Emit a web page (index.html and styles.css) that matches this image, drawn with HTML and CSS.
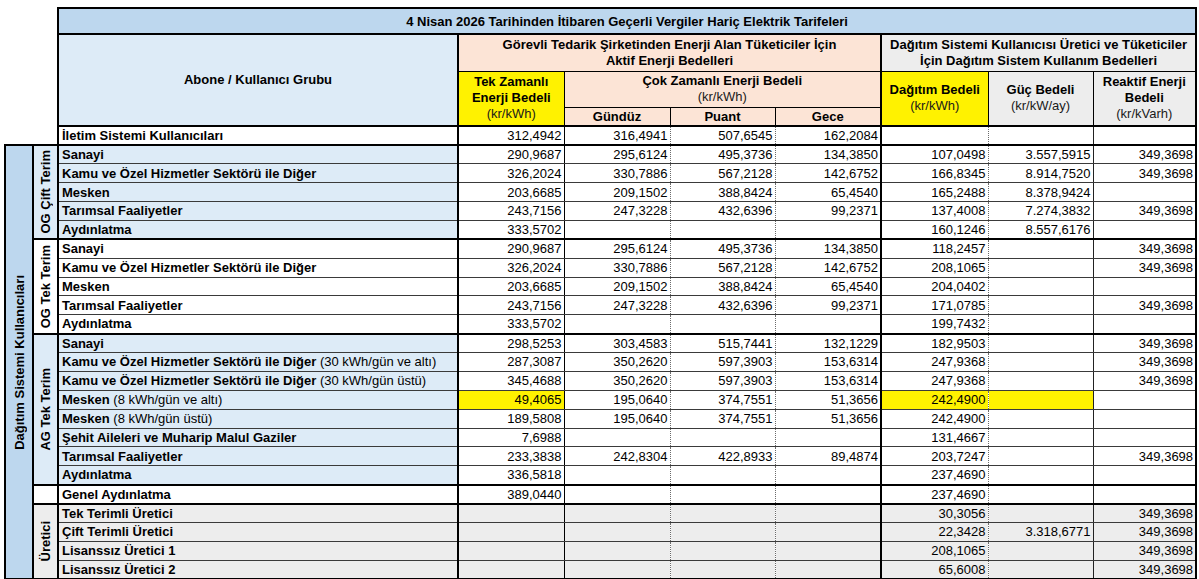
FILE: index.html
```html
<!DOCTYPE html>
<html lang="tr">
<head>
<meta charset="utf-8">
<title>Elektrik Tarifeleri</title>
<link rel="stylesheet" href="styles.css">
</head>
<body>
<table class="tariff">
  <colgroup>
    <col class="w-c1"><col class="w-c2"><col class="w-lb"><col class="w-n"><col class="w-n"><col class="w-n2"><col class="w-n"><col class="w-dg"><col class="w-n2"><col class="w-rk">
  </colgroup>
  <thead>
    <tr class="h1">
      <td class="blank" colspan="2" rowspan="4"></td>
      <th class="title" colspan="8">4 Nisan 2026 Tarihinden İtibaren Geçerli Vergiler Hariç Elektrik Tarifeleri</th>
    </tr>
    <tr class="h2">
      <th class="hgroup" rowspan="3">Abone / Kullanıcı Grubu</th>
      <th class="peach hsec" colspan="4">Görevli Tedarik Şirketinden Enerji Alan Tüketiciler İçin<br>Aktif Enerji Bedelleri</th>
      <th class="gray hsec hright" colspan="3">Dağıtım Sistemi Kullanıcısı Üretici ve Tüketiciler<br>İçin Dağıtım Sistem Kullanım Bedelleri</th>
    </tr>
    <tr class="h3">
      <th class="yellow tk" rowspan="2">Tek Zamanlı<br>Enerji Bedeli<br><span class="unit">(kr/kWh)</span></th>
      <th class="peach gd" colspan="3">Çok Zamanlı Enerji Bedeli<br><span class="unit">(kr/kWh)</span></th>
      <th class="yellow dg" rowspan="2">Dağıtım Bedeli<br><span class="unit">(kr/kWh)</span></th>
      <th class="gray gu" rowspan="2">Güç Bedeli<br><span class="unit">(kr/kW/ay)</span></th>
      <th class="gray rk" rowspan="2">Reaktif Enerji<br>Bedeli<br><span class="unit">(kr/kVarh)</span></th>
    </tr>
    <tr class="h4">
      <th class="peach gd">Gündüz</th>
      <th class="peach pu">Puant</th>
      <th class="peach gc">Gece</th>
    </tr>
  </thead>
  <tbody>
    <tr class="end">
      <td class="blank" colspan="2"></td>
      <td class="lb">İletim Sistemi Kullanıcıları</td>
      <td class="tk">312,4942</td><td class="gd">316,4941</td><td class="pu">507,6545</td><td class="gc">162,2084</td>
      <td class="dg"></td><td class="gu"></td><td class="rk"></td>
    </tr>

    <tr class="blue">
      <td class="c1" rowspan="23"><div class="vt">Dağıtım Sistemi Kullanıcıları</div></td>
      <td class="c2 blue" rowspan="5"><div class="vt">OG Çift Terim</div></td>
      <td class="lb">Sanayi</td>
      <td class="tk">290,9687</td><td class="gd">295,6124</td><td class="pu">495,3736</td><td class="gc">134,3850</td>
      <td class="dg">107,0498</td><td class="gu">3.557,5915</td><td class="rk">349,3698</td>
    </tr>
    <tr class="blue">
      <td class="lb">Kamu ve Özel Hizmetler Sektörü ile Diğer</td>
      <td class="tk">326,2024</td><td class="gd">330,7886</td><td class="pu">567,2128</td><td class="gc">142,6752</td>
      <td class="dg">166,8345</td><td class="gu">8.914,7520</td><td class="rk">349,3698</td>
    </tr>
    <tr class="blue">
      <td class="lb">Mesken</td>
      <td class="tk">203,6685</td><td class="gd">209,1502</td><td class="pu">388,8424</td><td class="gc">65,4540</td>
      <td class="dg">165,2488</td><td class="gu">8.378,9424</td><td class="rk"></td>
    </tr>
    <tr class="blue">
      <td class="lb">Tarımsal Faaliyetler</td>
      <td class="tk">243,7156</td><td class="gd">247,3228</td><td class="pu">432,6396</td><td class="gc">99,2371</td>
      <td class="dg">137,4008</td><td class="gu">7.274,3832</td><td class="rk">349,3698</td>
    </tr>
    <tr class="blue end">
      <td class="lb">Aydınlatma</td>
      <td class="tk">333,5702</td><td class="gd"></td><td class="pu"></td><td class="gc"></td>
      <td class="dg">160,1246</td><td class="gu">8.557,6176</td><td class="rk"></td>
    </tr>

    <tr>
      <td class="c2" rowspan="5"><div class="vt">OG Tek Terim</div></td>
      <td class="lb">Sanayi</td>
      <td class="tk">290,9687</td><td class="gd">295,6124</td><td class="pu">495,3736</td><td class="gc">134,3850</td>
      <td class="dg">118,2457</td><td class="gu"></td><td class="rk">349,3698</td>
    </tr>
    <tr>
      <td class="lb">Kamu ve Özel Hizmetler Sektörü ile Diğer</td>
      <td class="tk">326,2024</td><td class="gd">330,7886</td><td class="pu">567,2128</td><td class="gc">142,6752</td>
      <td class="dg">208,1065</td><td class="gu"></td><td class="rk">349,3698</td>
    </tr>
    <tr>
      <td class="lb">Mesken</td>
      <td class="tk">203,6685</td><td class="gd">209,1502</td><td class="pu">388,8424</td><td class="gc">65,4540</td>
      <td class="dg">204,0402</td><td class="gu"></td><td class="rk"></td>
    </tr>
    <tr>
      <td class="lb">Tarımsal Faaliyetler</td>
      <td class="tk">243,7156</td><td class="gd">247,3228</td><td class="pu">432,6396</td><td class="gc">99,2371</td>
      <td class="dg">171,0785</td><td class="gu"></td><td class="rk">349,3698</td>
    </tr>
    <tr class="end">
      <td class="lb">Aydınlatma</td>
      <td class="tk">333,5702</td><td class="gd"></td><td class="pu"></td><td class="gc"></td>
      <td class="dg">199,7432</td><td class="gu"></td><td class="rk"></td>
    </tr>

    <tr class="blue">
      <td class="c2 blue" rowspan="8"><div class="vt">AG Tek Terim</div></td>
      <td class="lb">Sanayi</td>
      <td class="tk">298,5253</td><td class="gd">303,4583</td><td class="pu">515,7441</td><td class="gc">132,1229</td>
      <td class="dg">182,9503</td><td class="gu"></td><td class="rk">349,3698</td>
    </tr>
    <tr class="blue">
      <td class="lb">Kamu ve Özel Hizmetler Sektörü ile Diğer <span class="note">(30 kWh/gün ve altı)</span></td>
      <td class="tk">287,3087</td><td class="gd">350,2620</td><td class="pu">597,3903</td><td class="gc">153,6314</td>
      <td class="dg">247,9368</td><td class="gu"></td><td class="rk">349,3698</td>
    </tr>
    <tr class="blue">
      <td class="lb">Kamu ve Özel Hizmetler Sektörü ile Diğer <span class="note">(30 kWh/gün üstü)</span></td>
      <td class="tk">345,4688</td><td class="gd">350,2620</td><td class="pu">597,3903</td><td class="gc">153,6314</td>
      <td class="dg">247,9368</td><td class="gu"></td><td class="rk">349,3698</td>
    </tr>
    <tr class="blue">
      <td class="lb">Mesken <span class="note">(8 kWh/gün ve altı)</span></td>
      <td class="tk yellow">49,4065</td><td class="gd">195,0640</td><td class="pu">374,7551</td><td class="gc">51,3656</td>
      <td class="dg yellow">242,4900</td><td class="gu yellow"></td><td class="rk"></td>
    </tr>
    <tr class="blue">
      <td class="lb">Mesken <span class="note">(8 kWh/gün üstü)</span></td>
      <td class="tk">189,5808</td><td class="gd">195,0640</td><td class="pu">374,7551</td><td class="gc">51,3656</td>
      <td class="dg">242,4900</td><td class="gu"></td><td class="rk"></td>
    </tr>
    <tr class="blue">
      <td class="lb">Şehit Aileleri ve Muharip Malul Gaziler</td>
      <td class="tk">7,6988</td><td class="gd"></td><td class="pu"></td><td class="gc"></td>
      <td class="dg">131,4667</td><td class="gu"></td><td class="rk"></td>
    </tr>
    <tr class="blue">
      <td class="lb">Tarımsal Faaliyetler</td>
      <td class="tk">233,3838</td><td class="gd">242,8304</td><td class="pu">422,8933</td><td class="gc">89,4874</td>
      <td class="dg">203,7247</td><td class="gu"></td><td class="rk">349,3698</td>
    </tr>
    <tr class="blue end">
      <td class="lb">Aydınlatma</td>
      <td class="tk">336,5818</td><td class="gd"></td><td class="pu"></td><td class="gc"></td>
      <td class="dg">237,4690</td><td class="gu"></td><td class="rk"></td>
    </tr>

    <tr class="end">
      <td class="c2"></td>
      <td class="lb">Genel Aydınlatma</td>
      <td class="tk">389,0440</td><td class="gd"></td><td class="pu"></td><td class="gc"></td>
      <td class="dg">237,4690</td><td class="gu"></td><td class="rk"></td>
    </tr>

    <tr class="gray">
      <td class="c2 gray" rowspan="4"><div class="vt">Üretici</div></td>
      <td class="lb">Tek Terimli Üretici</td>
      <td class="tk"></td><td class="gd"></td><td class="pu"></td><td class="gc"></td>
      <td class="dg">30,3056</td><td class="gu"></td><td class="rk">349,3698</td>
    </tr>
    <tr class="gray">
      <td class="lb">Çift Terimli Üretici</td>
      <td class="tk"></td><td class="gd"></td><td class="pu"></td><td class="gc"></td>
      <td class="dg">22,3428</td><td class="gu">3.318,6771</td><td class="rk">349,3698</td>
    </tr>
    <tr class="gray">
      <td class="lb">Lisanssız Üretici 1</td>
      <td class="tk"></td><td class="gd"></td><td class="pu"></td><td class="gc"></td>
      <td class="dg">208,1065</td><td class="gu"></td><td class="rk">349,3698</td>
    </tr>
    <tr class="gray end">
      <td class="lb">Lisanssız Üretici 2</td>
      <td class="tk"></td><td class="gd"></td><td class="pu"></td><td class="gc"></td>
      <td class="dg">65,6008</td><td class="gu"></td><td class="rk">349,3698</td>
    </tr>
  </tbody>
</table>
</body>
</html>
```

FILE: styles.css
```css
html, body {
  margin: 0;
  padding: 0;
  background: #ffffff;
}

body {
  font-family: "Liberation Sans", Arial, sans-serif;
  font-size: 13px;
  color: #000000;
}

.tariff {
  border-collapse: collapse;
  table-layout: fixed;
  width: 1191px;
  margin: 7px 0 0 4px;
}

.w-c1 { width: 28px; }
.w-c2 { width: 25px; }
.w-lb { width: 400px; }
.w-n  { width: 106px; }
.w-n2 { width: 105px; }
.w-dg { width: 107px; }
.w-rk { width: 103px; }

.tariff th,
.tariff td {
  box-sizing: border-box;
  padding: 0 3px;
  font-size: 13px;
  line-height: 15px;
  white-space: nowrap;
  overflow: hidden;
}

.tariff th {
  font-weight: bold;
  text-align: center;
  vertical-align: middle;
  border: 1px solid #000000;
}

.unit {
  font-weight: normal;
  color: #1a1a1a;
}

.tariff .blank {
  border: none;
  background: #ffffff;
}

/* header rows */
.h1 th { height: 26px; }
.h2 th { height: 37px; line-height: 16px; }
.h3 th { height: 36px; line-height: 16px; }
.h4 th { height: 19px; }

.tariff .title {
  background: #bdd7ee;
  border: 2px solid #000000;
}

.tariff .hgroup {
  background: #ddebf7;
  border-left: 2px solid #000000;
  border-right: 2px solid #000000;
  border-bottom: 2px solid #000000;
  height: auto;
}

.tariff .hsec {
  border-top: 2px solid #000000;
}

.tariff .hright {
  border-left: 2px solid #000000;
  border-right: 2px solid #000000;
}

.h4 th { border-bottom: 2px solid #000000; }
.tariff .h3 th.tk,
.tariff .h3 th.dg,
.tariff .h3 th.gu,
.tariff .h3 th.rk {
  border-bottom: 2px solid #000000;
  height: auto;
}

.peach { background: #fce4d6; }
.gray { background: #ededed; }
.yellow { background: #fff200; }

/* body cells */
.tariff tbody td {
  border-top: 1px solid #3a3a3a;
  border-bottom: 1px solid #3a3a3a;
  height: 18.875px;
  padding: 0 2px 0 3px;
  text-align: right;
  vertical-align: middle;
}

.tariff tbody tr.end td {
  border-bottom: 2px solid #000000;
}

.tariff tbody td.lb {
  text-align: left;
  font-weight: bold;
  border-left: 2px solid #000000;
  padding-left: 3px;
}

.note { font-weight: normal; }

.tariff .tk { border-left: 2px solid #000000; }
.tariff .gd { border-left: 1px solid #000000; }
.tariff .pu,
.tariff .gc,
.tariff .gu { border-left: 1px dotted #6a6a6a; }
.tariff .dg { border-left: 2px solid #000000; }
.tariff .rk { border-left: 1px solid #222222; border-right: 2px solid #000000; }

.tariff tbody tr.blue td.lb { background: #ddebf7; }
.tariff tbody tr.gray td.lb { background: #ededed; }
.tariff tbody td.yellow { background: #fff200; }

.tariff tbody td.c1 {
  background: #bdd7ee;
  border: 2px solid #000000;
  border-right: 1px solid #000000;
  padding: 0;
  text-align: center;
  height: auto;
}

.tariff tbody td.c2 {
  border: 2px solid #000000;
  padding: 0;
  text-align: center;
}

.tariff tbody td.c2[rowspan] { height: auto; }

.tariff tbody td.c2.blue { background: #ddebf7; }
.tariff tbody td.c2.gray { background: #ededed; }

.vt {
  writing-mode: vertical-rl;
  transform: rotate(180deg);
  font-weight: bold;
  white-space: nowrap;
  margin: 0 auto;
  line-height: 15px;
}
```
